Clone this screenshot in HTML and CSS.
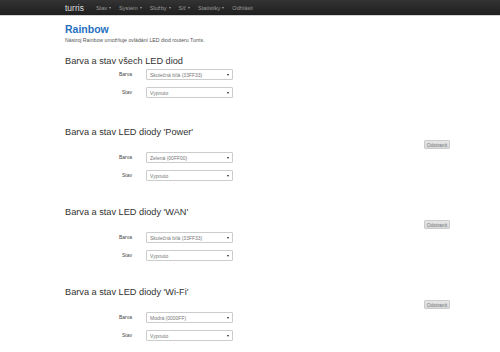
FILE: index.html
```html
<!DOCTYPE html>
<html lang="cs">
  <head>
    <meta charset="UTF-8" />
    <title>Rainbow - turris</title>
    <link rel="stylesheet" href="styles.css">
  </head>
  <body>
    <!--==================== HEADER ====================-->
    <header class="navbar">
      <nav class="container nav">
        <a href="#" class="nav__brand">turris</a>
        <ul class="nav__list">
          <li class="nav__item"><a href="#" class="nav__link">Stav <span class="caret"></span></a></li>
          <li class="nav__item"><a href="#" class="nav__link">Systém <span class="caret"></span></a></li>
          <li class="nav__item"><a href="#" class="nav__link">Služby <span class="caret"></span></a></li>
          <li class="nav__item"><a href="#" class="nav__link">Síť <span class="caret"></span></a></li>
          <li class="nav__item"><a href="#" class="nav__link">Statistiky <span class="caret"></span></a></li>
          <li class="nav__item"><a href="#" class="nav__link">Odhlásit</a></li>
        </ul>
      </nav>
    </header>

    <main class="container">
      <h1 class="title">Rainbow</h1>
      <p class="desc">Nástroj Rainbow umožňuje ovládání LED diod routeru Turris.</p>

      <section class="led led--all">
        <h2 class="led__title">Barva a stav všech LED diod</h2>
        <div class="row">
          <label class="row__label">Barva</label>
          <div class="select"><select><option>Skutečná bílá (33FF33)</option></select></div>
        </div>
        <div class="row">
          <label class="row__label">Stav</label>
          <div class="select"><select><option>Vypnuto</option></select></div>
        </div>
      </section>

      <section class="led">
        <h2 class="led__title">Barva a stav LED diody 'Power'</h2>
        <div class="led__actions"><button class="btn">Odstranit</button></div>
        <div class="row">
          <label class="row__label">Barva</label>
          <div class="select"><select><option>Zelená (00FF00)</option></select></div>
        </div>
        <div class="row">
          <label class="row__label">Stav</label>
          <div class="select"><select><option>Vypnuto</option></select></div>
        </div>
      </section>

      <section class="led">
        <h2 class="led__title">Barva a stav LED diody 'WAN'</h2>
        <div class="led__actions"><button class="btn">Odstranit</button></div>
        <div class="row">
          <label class="row__label">Barva</label>
          <div class="select"><select><option>Skutečná bílá (33FF33)</option></select></div>
        </div>
        <div class="row">
          <label class="row__label">Stav</label>
          <div class="select"><select><option>Vypnuto</option></select></div>
        </div>
      </section>

      <section class="led">
        <h2 class="led__title">Barva a stav LED diody 'Wi-Fi'</h2>
        <div class="led__actions"><button class="btn">Odstranit</button></div>
        <div class="row">
          <label class="row__label">Barva</label>
          <div class="select"><select><option>Modrá (0000FF)</option></select></div>
        </div>
        <div class="row">
          <label class="row__label">Stav</label>
          <div class="select"><select><option>Vypnuto</option></select></div>
        </div>
      </section>
    </main>
  </body>
</html>
```

FILE: styles.css
```css
body {
  font-family: "Liberation Sans", Arial, sans-serif;
  margin: 0;
  padding: 0;
  background-color: #fff;
  color: #333;
  overflow: hidden;
}
.container {
  width: 385px;
  margin-left: 65px;
}
.navbar {
  height: 15px;
  background: linear-gradient(#333, #1f1f1f);
  border-bottom: 1px solid #d4d4d4;
}
.nav {
  display: flex;
  align-items: center;
  height: 15px;
}
.nav__brand {
  color: #ddd;
  font-size: 8.5px;
  text-decoration: none;
  margin-right: 12px;
}
.nav__list {
  display: flex;
  list-style: none;
  margin: 0;
  padding: 0;
  gap: 8px;
}
.nav__link {
  color: #999;
  font-size: 5.6px;
  text-decoration: none;
  display: flex;
  align-items: center;
  gap: 2px;
}
.caret {
  width: 0;
  height: 0;
  border-left: 1.5px solid transparent;
  border-right: 1.5px solid transparent;
  border-top: 2px solid #999;
}
.title {
  color: #1f6fbf;
  font-size: 10.5px;
  line-height: 13px;
  margin: 7px 0 0;
}
.desc {
  font-size: 5.2px;
  line-height: 7px;
  color: #555;
  margin: 1px 0 0;
}
.led {
  margin-top: 25px;
}
.led--all {
  margin-top: 11px;
  padding-bottom: 3px;
}
.led__title {
  font-size: 9.2px;
  line-height: 12px;
  font-weight: normal;
  color: #333;
  margin: 0 0 2px;
}
.led__actions {
  display: flex;
  justify-content: flex-end;
  margin: 0 0 3px;
}
.btn {
  display: block;
  width: 26px;
  height: 9px;
  padding: 0;
  font-family: inherit;
  font-size: 5px;
  color: #777;
  background: linear-gradient(#e6e6e6, #d9d9d9);
  border: 1px solid #ccc;
  border-radius: 1px;
}
.row {
  display: flex;
  align-items: center;
  height: 11px;
  margin-bottom: 7px;
  font-size: 5px;
}
.row:last-child {
  margin-bottom: 0;
}
.row__label {
  width: 67px;
  text-align: right;
  font-size: 5px;
  line-height: 7px;
  color: #444;
  margin-right: 14px;
}
.select {
  position: relative;
  width: 87px;
  height: 11px;
  font-size: 5px;
}
.select select {
  display: block;
  appearance: none;
  -webkit-appearance: none;
  width: 100%;
  height: 100%;
  margin: 0;
  padding: 0 0 0 3px;
  font-family: inherit;
  font-size: 5px;
  color: #777;
  background-color: #fff;
  border: 1px solid #ccc;
  border-radius: 1px;
  box-sizing: border-box;
}
.select::after {
  content: "";
  position: absolute;
  right: 4px;
  top: 4.5px;
  border-left: 1.5px solid transparent;
  border-right: 1.5px solid transparent;
  border-top: 2px solid #222;
}
```
